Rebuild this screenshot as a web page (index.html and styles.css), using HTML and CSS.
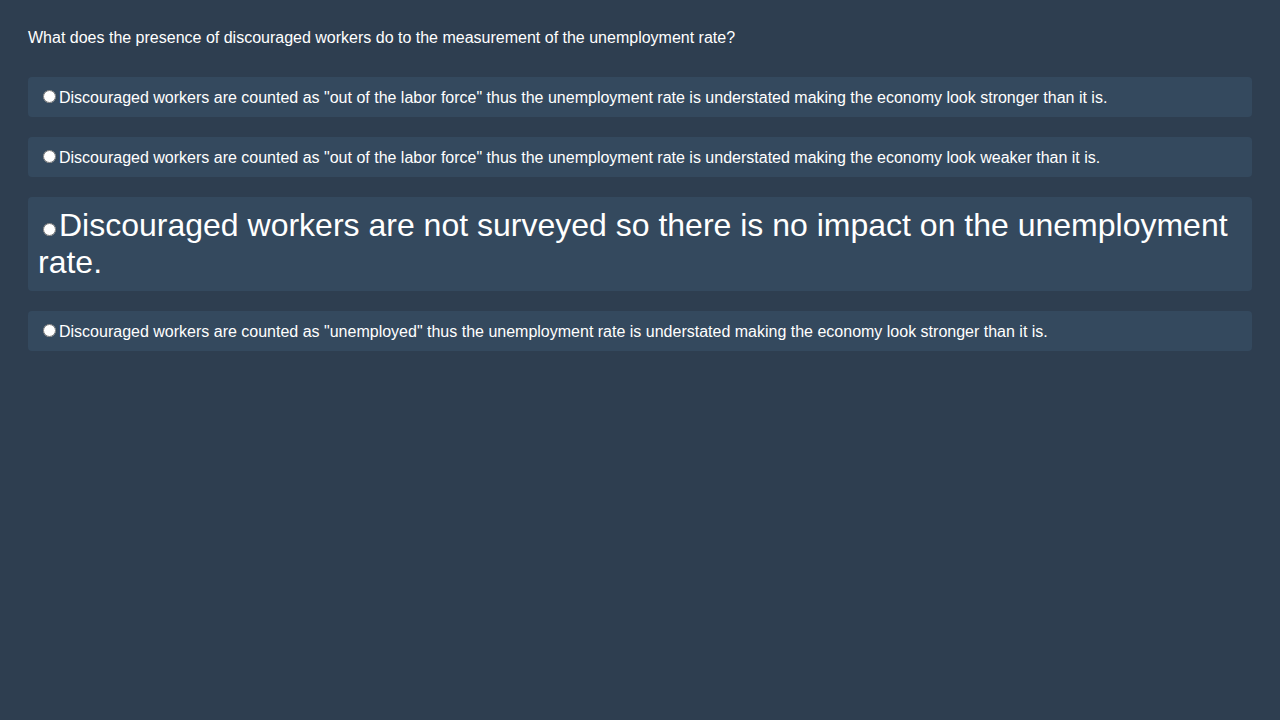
FILE: index.html
```html
<!DOCTYPE html>
<html>
<head>
<meta charset="utf-8">
<link rel="stylesheet" href="styles.css">
</head>
<body>
<div class="quiz">
  <div class="question">What does the presence of discouraged workers do to the measurement of the unemployment rate?</div>
  <label class="option"><input type="radio" name="q">Discouraged workers are counted as "out of the labor force" thus the unemployment rate is understated making the economy look stronger than it is.</label>
  <label class="option"><input type="radio" name="q">Discouraged workers are counted as "out of the labor force" thus the unemployment rate is understated making the economy look weaker than it is.</label>
  <label class="option big"><input type="radio" name="q">Discouraged workers are not surveyed so there is no impact on the unemployment rate.</label>
  <label class="option"><input type="radio" name="q">Discouraged workers are counted as "unemployed" thus the unemployment rate is understated making the economy look stronger than it is.</label>
</div>
</body>
</html>
```

FILE: styles.css
```css
html, body {
  margin: 0;
  background: #2e3e50;
}
body {
  font-family: "Liberation Sans", Arial, sans-serif;
  font-size: 16px;
  color: #ffffff;
}
.quiz {
  padding: 28px;
  display: flex;
  flex-direction: column;
  gap: 20px;
}
.question {
  line-height: 18px;
  padding-top: 1px;
  margin-bottom: 10px;
}
.option {
  display: block;
  background: #34495e;
  border-radius: 4px;
  padding: 10px;
}
.option input {
  margin: 3px 3px 0 5px;
}
.big {
  font-size: 32px;
}
```
